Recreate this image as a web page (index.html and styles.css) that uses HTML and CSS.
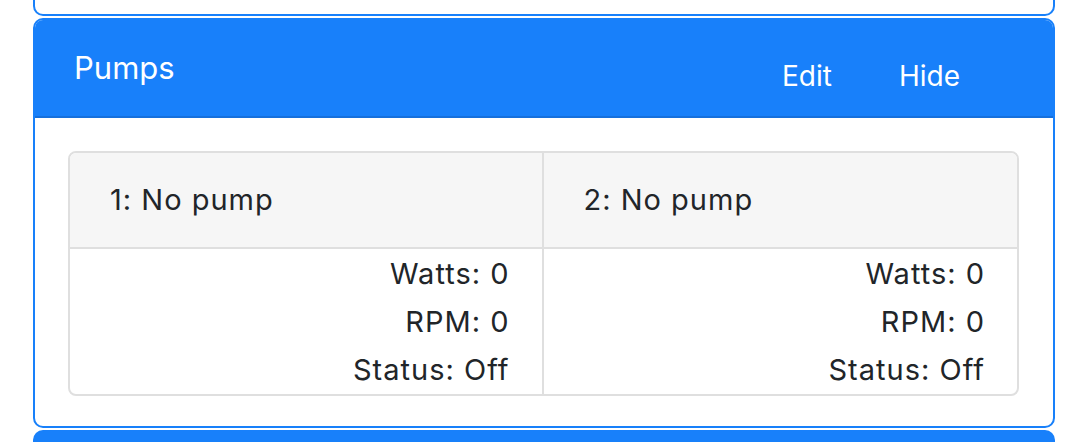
FILE: index.html
```html
<!DOCTYPE html>
<html>
<head>
<meta charset="utf-8">
<link rel="stylesheet" href="styles.css">
</head>
<body>
<div class="page">
  <div class="card-prev"></div>
  <div class="card">
    <div class="card-header">
      <span class="card-title">Pumps</span>
      <div class="actions">
        <button class="link-btn">Edit</button>
        <button class="link-btn">Hide</button>
      </div>
    </div>
    <div class="card-body">
      <div class="pump-grid">
        <div class="cell head">1: No pump</div>
        <div class="cell head last">2: No pump</div>
        <div class="cell stats">
          <div>Watts: 0</div>
          <div>RPM: 0</div>
          <div>Status: Off</div>
        </div>
        <div class="cell stats last">
          <div>Watts: 0</div>
          <div>RPM: 0</div>
          <div>Status: Off</div>
        </div>
      </div>
    </div>
  </div>
  <div class="card-next"></div>
</div>
</body>
</html>
```
FILE: styles.css
```css
* { box-sizing: border-box; }
html, body { margin: 0; padding: 0; background: #fff; }
body {
  font-family: Inter, "Noto Sans", sans-serif;
  color: #212529;
  overflow: hidden;
  height: 442px;
}
.page {
  width: 1022px;
  margin-left: 33px;
  display: flex;
  flex-direction: column;
  gap: 2px;
}
.card-prev {
  height: 16px;
  border: 2px solid #1880fa;
  border-top: none;
  border-radius: 0 0 10px 10px;
}
.card {
  border: 2px solid #1880fa;
  border-radius: 10px;
  overflow: hidden;
}
.card-header {
  height: 98px;
  background: #1880fa;
  border-bottom: 2px solid #1670dc;
  color: #fff;
  display: flex;
  align-items: center;
  padding: 0 93px 0 39px;
}
.card-title {
  font-size: 31px;
  line-height: 1.2;
}
.actions {
  margin-left: auto;
  display: flex;
  gap: 67px;
  padding-top: 17px;
}
.link-btn {
  background: none;
  border: none;
  padding: 0;
  color: #fff;
  font-family: inherit;
  font-size: 28px;
  line-height: 1.2;
}
.card-body {
  padding: 33px 34px 30px 33px;
}
.pump-grid {
  display: grid;
  grid-template-columns: 1fr 1fr;
  border: 2px solid #dfdfdf;
  border-radius: 8px;
  overflow: hidden;
  font-size: 29px;
  line-height: 48px;
  letter-spacing: 1px;
}
.cell { border-right: 2px solid #dfdfdf; }
.cell.last { border-right: none; }
.head {
  background: #f6f6f6;
  border-bottom: 2px solid #dfdfdf;
  padding: 23px 40px;
}
.stats {
  text-align: right;
  padding: 1px 32px 0 0;
}
.card-next {
  height: 20px;
  background: #1880fa;
  border-radius: 10px 10px 0 0;
}
```
